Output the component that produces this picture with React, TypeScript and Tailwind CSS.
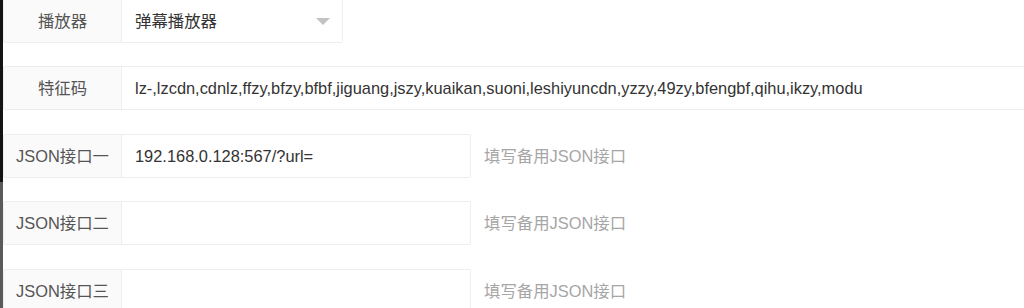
import React from 'react';

const font = "font-['Liberation_Sans','Noto_Sans_CJK_SC',sans-serif]";

const Label = ({ text }: { text: string }) => (
  <div className="flex h-full w-[119px] shrink-0 items-center justify-center rounded-l-[2px] border border-[#eeeeee] bg-[#fafafa] text-[16.4px] text-[#555555]">
    {text}
  </div>
);

const JsonRow = ({
  label,
  value,
  className,
}: {
  label: string;
  value?: string;
  className: string;
}) => (
  <div className={`flex h-[44px] shrink-0 items-center ${className}`}>
    <Label text={label} />
    <div className="flex h-full w-[349px] items-center rounded-r-[2px] border border-l-0 border-[#eeeeee] bg-white pl-[13px] text-[16.4px] text-[#333333]">
      {value}
    </div>
    <div className="pl-[13px] text-[16.4px] text-[#a6a6a6]">填写备用JSON接口</div>
  </div>
);

export default function App() {
  return (
    <div className={`flex h-[308px] w-[1024px] overflow-hidden bg-white ${font}`}>
      <div className="flex w-[3px] shrink-0 flex-col">
        <div className="h-[182px] bg-[#141416]" />
        <div className="flex-1 bg-[#5a5a5a]" />
      </div>
      <div className="-mt-[1px] flex min-w-0 flex-1 flex-col">
        <div className="flex h-[44px] shrink-0 items-center">
          <Label text="播放器" />
          <div className="relative flex h-full w-[221px] items-center rounded-r-[2px] border border-l-0 border-[#eeeeee] bg-white pl-[13px] text-[16.4px] text-[#333333]">
            弹幕播放器
            <span className="absolute right-[12px] top-[18px] h-0 w-0 border-x-[7px] border-t-[7px] border-x-transparent border-t-[#c2c2c2]" />
          </div>
        </div>
        <div className="mt-[23px] flex h-[44px] shrink-0 items-center">
          <Label text="特征码" />
          <div className="flex h-full flex-1 items-center border border-r-0 border-l-0 border-[#eeeeee] bg-white pl-[13px] text-[16.4px] whitespace-nowrap text-[#333333]">
            lz-,lzcdn,cdnlz,ffzy,bfzy,bfbf,jiguang,jszy,kuaikan,suoni,leshiyuncdn,yzzy,49zy,bfengbf,qihu,ikzy,modu
          </div>
        </div>
        <JsonRow className="mt-[24px]" label="JSON接口一" value="192.168.0.128:567/?url=" />
        <JsonRow className="mt-[23px]" label="JSON接口二" />
        <JsonRow className="mt-[24px]" label="JSON接口三" />
      </div>
    </div>
  );
}
